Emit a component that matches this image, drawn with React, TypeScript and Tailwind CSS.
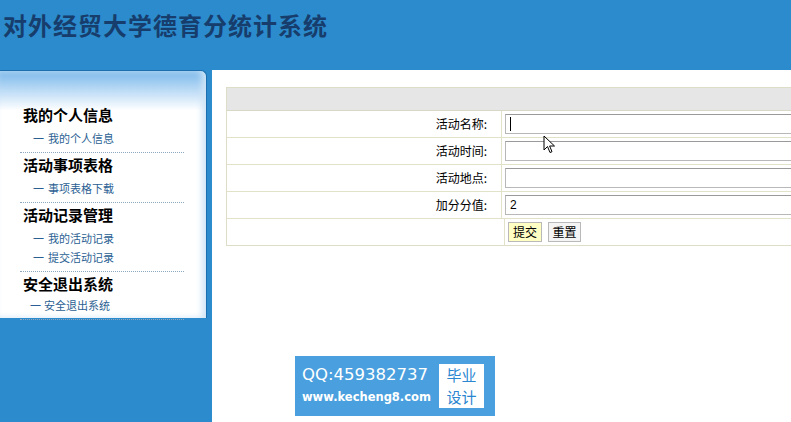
import React from "react";

const cjk = { fontFamily: '"Noto Sans CJK SC", "Liberation Sans", sans-serif' };

type Group = { title: string; links: string[]; tight?: boolean };

const groups: Group[] = [
  { title: "我的个人信息", links: ["我的个人信息"] },
  { title: "活动事项表格", links: ["事项表格下载"] },
  { title: "活动记录管理", links: ["我的活动记录", "提交活动记录"] },
  { title: "安全退出系统", links: ["安全退出系统"], tight: true },
];

const fields = [
  { label: "活动名称:", value: "", caret: true },
  { label: "活动时间:", value: "" },
  { label: "活动地点:", value: "" },
  { label: "加分分值:", value: "2" },
];

function Sidebar() {
  return (
    <div className="w-[207px] h-[248px] rounded-tr-[6px] border-t border-r border-[#1c6fae] bg-gradient-to-b from-[#7ab8ea] via-white via-[16%] to-white shadow-[inset_-4px_0_6px_#cfe4f6] pt-[32px] pl-[20px] pr-[22px]">
      {groups.map((g) => (
        <div key={g.title} className="border-b border-dotted border-[#8fa7bf] pb-[4px]">
          <div className="pl-[3px] text-[15px] font-bold leading-[24px] text-black">{g.title}</div>
          <div className={g.tight ? "" : "pt-[2px]"}>
            {g.links.map((l) => (
              <div
                key={l}
                className={
                  "flex text-[11px] leading-[19px] text-[#2b5f93] " +
                  (g.tight ? "pl-[10px]" : "pl-[13px]")
                }
              >
                <span className={g.tight ? "w-[14px]" : "w-[15px]"}>一</span>
                <span>{l}</span>
              </div>
            ))}
          </div>
        </div>
      ))}
    </div>
  );
}

function FormTable() {
  return (
    <div className="w-[600px] border border-[#dedec8] text-[12px] text-black">
      <div className="h-[23px] bg-[#e6e6e6] border-b border-[#d8d8c6]" />
      {fields.map((f) => (
        <div key={f.label} className="flex h-[27px] border-b border-[#e2e2c8]">
          <div className="w-[278px] border-r border-[#e2e2c8] flex items-center justify-end pr-[14px]">
            {f.label}
          </div>
          <div className="flex-1 flex items-center pl-[3px]">
            <div
              className="w-[320px] h-[20px] border border-[#b8b8b8] border-t-[#9a9a9a] bg-white flex items-center pl-[4px] text-[12px]"
              style={{ fontFamily: '"Liberation Sans", sans-serif' }}
            >
              {f.caret && <span className="w-px h-[14px] bg-black" />}
              {f.value}
            </div>
          </div>
        </div>
      ))}
      <div className="flex h-[26px]">
        <div className="w-[278px] border-r border-[#e2e2c8]" />
        <div className="flex-1 flex items-center gap-[6px] pl-[3px]">
          <button className="h-[20px] w-[34px] border border-[#b9b9b9] bg-[#ffffc4] text-[12px] leading-[18px]">提交</button>
          <button className="h-[20px] w-[33px] border border-[#b9b9b9] bg-[#f4f4f4] text-[12px] leading-[18px]">重置</button>
        </div>
      </div>
    </div>
  );
}

export default function App() {
  return (
    <div className="relative w-[791px] h-[422px] overflow-hidden bg-[#2b8bcd]" style={cjk}>
      <div className="h-[70px] pl-[3px] pt-[7px]">
        <h1 className="text-[24px] font-semibold tracking-[1px] text-[#173d6c]">对外经贸大学德育分统计系统</h1>
      </div>
      <div className="flex gap-[5px]">
        <Sidebar />
        <div className="flex-1 h-[352px] bg-white overflow-hidden pl-[14px] pt-[17px]">
          <FormTable />
        </div>
      </div>

      {/* watermark */}
      <div className="absolute left-[295px] top-[356px] w-[200px] h-[60px] bg-[#4a9fde] flex items-center pl-[7px] gap-[3px]">
        <div className="w-[134px] flex flex-col text-white" style={{ fontFamily: '"DejaVu Sans", "Liberation Sans", sans-serif' }}>
          <span className="text-[16.5px] leading-[22px]">QQ:459382737</span>
          <span className="text-[11.5px] font-bold leading-[22px]">www.kecheng8.com</span>
        </div>
        <div className="w-[45px] h-[44px] bg-white text-[#2a86d0] text-[15px] leading-[22px] flex flex-col items-center justify-center">
          <span>毕业</span>
          <span>设计</span>
        </div>
      </div>

      {/* mouse pointer */}
      <svg className="absolute left-[543px] top-[135px]" width="13" height="20" viewBox="0 0 13 20">
        <path d="M1 1 L1 15 L4.5 11.5 L7 17.5 L9 16.7 L6.6 11 L11.5 11 Z" fill="white" stroke="black" strokeWidth="1" />
      </svg>
    </div>
  );
}
